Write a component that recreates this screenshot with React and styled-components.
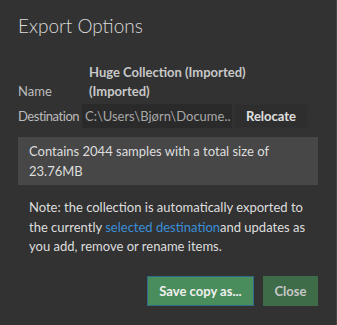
import React from "react";
import styled, { createGlobalStyle } from "styled-components";

const GlobalStyle = createGlobalStyle`
  html, body {
    margin: 0;
    padding: 0;
    background: #323232;
  }
  body {
    font-family: Lato, "Open Sans", sans-serif;
  }
`;

const Dialog = styled.div`
  box-sizing: border-box;
  width: 337px;
  height: 325px;
  padding: 14px 18px 0 18px;
  background: #323232;
  border-right: 1px solid #454545;
  color: #d4d4d4;
  font-size: 13px;
`;

const Title = styled.h1`
  margin: 0;
  font-size: 19px;
  font-weight: 300;
  color: #dcdcdc;
  line-height: 24px;
`;

const NameRow = styled.div`
  display: flex;
  align-items: flex-end;
  margin-top: 25px;
  line-height: 19px;
`;

const Label = styled.span`
  flex: none;
  width: ${(p) => p.width || "auto"};
  color: #bcbcbc;
  white-space: nowrap;
  letter-spacing: ${(p) => (p.tight ? "-0.45px" : "normal")};
`;

const NameValue = styled.span`
  font-weight: 700;
  color: #c8c8c8;
  width: 180px;
`;

const DestRow = styled.div`
  display: flex;
  align-items: center;
  gap: 2px;
  margin-top: 3px;
  height: 24px;
`;

const PathBox = styled.div`
  box-sizing: border-box;
  width: 150px;
  height: 24px;
  padding: 0 3px;
  background: #2a2a2a;
  color: #a8a8a8;
  line-height: 24px;
  white-space: nowrap;
  overflow: hidden;
`;

const Button = styled.button`
  box-sizing: border-box;
  width: ${(p) => p.w || "auto"};
  height: ${(p) => p.h || "30px"};
  padding: 0 ${(p) => p.px || "11px"};
  font-family: inherit;
  font-size: 13px;
  font-weight: 700;
  color: ${(p) => p.fg || "#e0e0e0"};
  background: ${(p) => p.bg || "#2f2f2f"};
  border: 1px solid ${(p) => p.bc || p.bg || "#2f2f2f"};
  cursor: pointer;
`;

const Info = styled.div`
  margin-top: 9px;
  padding: 4px 11px;
  background: #474747;
  color: #dedede;
  line-height: 20px;
`;

const Note = styled.p`
  margin: 13px 11px 0 11px;
  line-height: 19.5px;
  color: #dedede;
`;

const Link = styled.a`
  color: #3a8fd8;
  text-decoration: none;
`;

const Actions = styled.div`
  display: flex;
  justify-content: flex-end;
  gap: 9px;
  margin-top: 19px;
`;

export default function App() {
  return (
    <>
      <GlobalStyle />
      <Dialog>
        <Title>Export Options</Title>
        <NameRow>
          <Label width="71px">Name</Label>
          <NameValue>Huge Collection (Imported) (Imported)</NameValue>
        </NameRow>
        <DestRow>
          <Label width="62px" tight>
            Destination
          </Label>
          <PathBox>C:\Users\Bjørn\Docume..</PathBox>
          <Button w="74px" h="24px" px="0" bg="#2e2e2e" bc="#303030">
            Relocate
          </Button>
        </DestRow>
        <Info>Contains 2044 samples with a total size of 23.76MB</Info>
        <Note>
          Note: the collection is automatically exported to the currently{" "}
          <Link href="#">selected destination</Link>and updates as you add,
          remove or rename items.
        </Note>
        <Actions>
          <Button bg="#4a8d5c" bc="#2f6a88" fg="#f0f0f0" w="107px" px="0">
            Save copy as...
          </Button>
          <Button bg="#3e6b48" fg="#c8c8c8" w="55px" px="0">
            Close
          </Button>
        </Actions>
      </Dialog>
    </>
  );
}
